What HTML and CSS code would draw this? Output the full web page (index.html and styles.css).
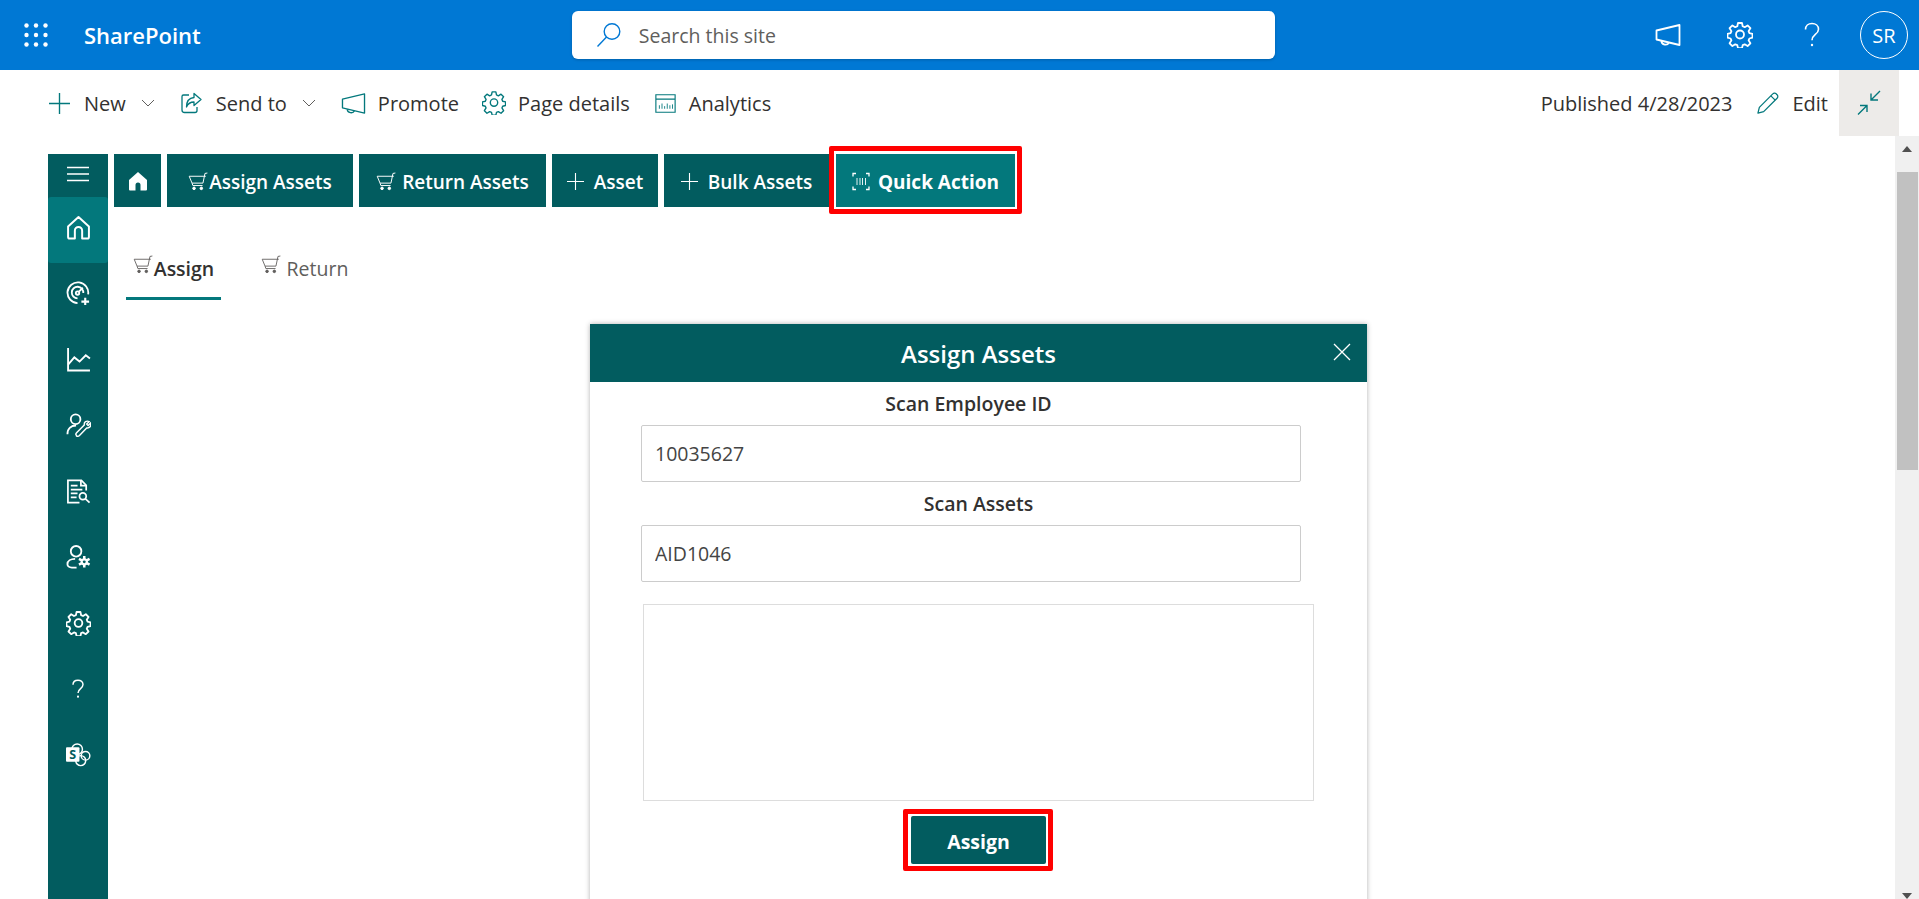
FILE: index.html
```html
<!DOCTYPE html>
<html lang="en">
<head>
  <meta charset="UTF-8">
  <title>Assign Assets</title>
  <link rel="stylesheet" href="styles.css">
</head>
<body>
  <header class="suite-bar">
    <svg class="waffle" viewBox="0 0 24 24" fill="#fff"><circle cx="2.5" cy="2.5" r="2.2"/><circle cx="12" cy="2.5" r="2.2"/><circle cx="21.500" cy="2.5" r="2.2"/><circle cx="2.5" cy="12" r="2.2"/><circle cx="12" cy="12" r="2.2"/><circle cx="21.500" cy="12" r="2.2"/><circle cx="2.5" cy="21.500" r="2.2"/><circle cx="12" cy="21.500" r="2.2"/><circle cx="21.500" cy="21.500" r="2.2"/></svg>
    <span class="brand">SharePoint</span>
    <div class="search">
      <svg class="search-icon" viewBox="0 0 26 26" fill="none" stroke="#0078d4" stroke-width="1.4"><circle cx="16" cy="9.500" r="7.800"/><path d="M10.500 15 1.500 24.500"/></svg>
      <span>Search this site</span>
    </div>
    <div class="suite-icons">
      <svg class="suite-icon" viewBox="0 0 26 24" fill="none" stroke="#fff" stroke-width="1.800" stroke-linejoin="round"><path d="M1.500 7.500 24.500 2v20L1.500 16.500z"/><path d="M6.500 18c0 4 6 5 7.500 1.500"/></svg>
      <svg class="suite-icon" viewBox="0 0 26 26" fill="none" stroke="#fff" stroke-width="1.800" stroke-linejoin="round"><use href="#gear-path"/></svg>
      <svg class="suite-icon" viewBox="0 0 26 26" fill="none" stroke="#fff" stroke-width="1.600"><path d="M6.500 7.500C6.500 3.800 9.300 1.500 13 1.500s6.500 2.300 6.500 5.700c0 5.300-6.500 5.300-6.500 11"/><circle cx="13" cy="23" r="1.200" fill="#fff" stroke="none"/></svg>
      <div class="avatar">SR</div>
    </div>
  </header>

  <div class="command-bar">
    <button class="cmd"><svg class="cmd-icon plus-icon" viewBox="0 0 20 20" stroke="#03787c" stroke-width="1.300"><path d="M10 0v20M0 10h20"/></svg><span>New</span><svg class="chev" viewBox="0 0 14 8" fill="none" stroke="#605e5c"><path d="M1 1l6 6 6-6"/></svg></button>
    <button class="cmd"><svg class="cmd-icon send" viewBox="0 0 22 22" fill="none" stroke="#03787c" stroke-width="1.300" stroke-linejoin="round"><path d="M9 3H3.500a1.500 1.500 0 0 0-1.500 1.500V18A2.500 2.500 0 0 0 4.500 20.500H15a2 2 0 0 0 2-2V15"/><path d="M14 1.500 21 7.500l-7 6V10c-4 0-6 1.500-7.500 5 0-5 2.500-9 7.500-9.500z"/></svg><span>Send to</span><svg class="chev" viewBox="0 0 14 8" fill="none" stroke="#605e5c"><path d="M1 1l6 6 6-6"/></svg></button>
    <button class="cmd promote"><svg class="cmd-icon wide" viewBox="0 0 26 24" fill="none" stroke="#03787c" stroke-width="1.400" stroke-linejoin="round"><path d="M1.500 7.500 24.500 2v20L1.500 16.500z"/><path d="M6.500 18c0 4 6 5 7.500 1.500"/></svg><span>Promote</span></button>
    <button class="cmd"><svg class="cmd-icon gear" viewBox="0 0 26 26" fill="none" stroke="#03787c" stroke-width="1.500" stroke-linejoin="round"><use href="#gear-path"/></svg><span>Page details</span></button>
    <button class="cmd"><svg class="cmd-icon" viewBox="0 0 24 22" fill="none" stroke="#03787c" stroke-width="1.300"><path d="M1 1h22v20H1zM1 6h22"/><path d="M5 17v-4M8 17v-6M11 17v-3M14 17v-6M17 17v-4M20 17v-5" stroke-width="1"/></svg><span>Analytics</span></button>
    <div class="cmd-right">
      <span class="published">Published 4/28/2023</span>
      <button class="cmd"><svg class="cmd-icon pencil" viewBox="0 0 24 24" fill="none" stroke="#03787c" stroke-width="1.300" stroke-linejoin="round"><path d="M2 22l1.500-6L17.500 2a2.500 2.500 0 0 1 4 .5 2.500 2.500 0 0 1 .5 4L8 20.500z"/><path d="M15.500 4l4.500 4.500"/></svg><span>Edit</span></button>
      <div class="collapse"><svg class="collapse-icon" viewBox="0 0 26 26" fill="none" stroke="#03787c" stroke-width="1.400"><path d="M24 1 15 10M15 3.500V10h7M2 24.500l9-9M11 22v-6.500H4"/></svg></div>
    </div>
  </div>

  <svg class="defs" width="0" height="0">
    <defs>
      <path id="gear-path" d="M11 1.500h4l.7 3.300 2 .9 2.900-1.800 2.800 2.800-1.800 2.900.8 2 3.100.7v3.900l-3.100.8-.8 1.900 1.800 2.900-2.800 2.800-2.900-1.800-2 .8-.7 3.100h-4l-.7-3.100-2-.8-2.900 1.800-2.800-2.800 1.800-2.900-.8-1.900-3.100-.8V12.300l3.100-.7.800-2-1.800-2.900 2.800-2.800 2.900 1.800 2-.9zM13 9a4 4 0 1 0 0 8 4 4 0 0 0 0-8z" transform="translate(0 -.500)"/>
      <g id="cart"><path d="M24 1l-3 .500-2.500 12H5L1.500 5h20.500" fill="none"/><path d="M5 13.500l1 3h12" fill="none"/><circle cx="7.500" cy="20" r="1.600"/><circle cx="16.500" cy="20" r="1.600"/></g>
    </defs>
  </svg>

  <div class="workspace">
    <nav class="side-nav">
      <div class="nav-toggle"><svg class="hamburger" viewBox="0 0 22 16" stroke="#fff" stroke-width="1.300"><path d="M0 1.500h22M0 8h22M0 14.500h22"/></svg></div>
      <div class="nav-item active"><svg viewBox="0 0 24 24" fill="none" stroke="#fff" stroke-width="1.900" stroke-linejoin="round"><path d="M12 2 2 11v10a1.500 1.500 0 0 0 1.500 1.500H8.500V15a3.500 3.500 0 0 1 7 0v7.500h5A1.500 1.500 0 0 0 22 21V11z"/></svg></div>
      <div class="nav-item"><svg viewBox="0 0 26 26" fill="none" stroke="#fff" stroke-width="1.900"><path d="M23 14A10.800 10.800 0 1 0 12 23"/><path d="M18 12.500A6 6 0 1 0 12 18"/><circle cx="12" cy="12.500" r="1.800"/><path d="M13.500 11l4-4"/><path d="M20 17.500v7.500M16 21.500h8" stroke-width="2.200"/></svg></div>
      <div class="nav-item"><svg viewBox="0 0 24 24" fill="none" stroke="#fff" stroke-width="1.800"><path d="M2 1v21.500h21"/><path d="M2 17l6-7 5 4 6-6 4 3"/></svg></div>
      <div class="nav-item"><svg viewBox="0 0 26 26" fill="none" stroke="#fff" stroke-width="1.900"><circle cx="10" cy="6.500" r="5"/><path d="M1.500 22c0-6 4-9 9-9"/><path d="M11 23.500c-1-1-1-2 0-3l8-8c-.5-3 2.500-5 5-3.500l-2.500 2.500 1.500 1.500 2.500-2.500c1 3-1 5.500-4 5l-7.500 8c-1 1-2 1-3 .500z" stroke-width="1.500"/></svg></div>
      <div class="nav-item"><svg viewBox="0 0 26 26" fill="none" stroke="#fff" stroke-width="1.800"><path d="M21 12V6.500L16 1.500H2v23h12"/><path d="M15.500 1.500v5.500H21"/><path d="M5 7h7M5 11h12M5 15h7M5 19h6"/><circle cx="17.500" cy="18" r="3.500"/><path d="M20 20.500l4.500 4"/></svg></div>
      <div class="nav-item"><svg viewBox="0 0 26 26" fill="none" stroke="#fff" stroke-width="1.900"><circle cx="10.500" cy="6.500" r="5.500"/><path d="M11 23.500H6c-2.500 0-4.500-1.500-4.500-3.500 0-3.500 3.500-5.500 8-5.500"/><path d="M19 11.500v12M13.500 14.500l11 6M13.500 20.500l11-6" stroke-width="2.600"/><circle cx="19" cy="17.500" r="3.800" fill="#fff" stroke="none"/><circle cx="19" cy="17.500" r="1.500" fill="#025c5f" stroke="none"/></svg></div>
      <div class="nav-item"><svg viewBox="0 0 26 26" fill="none" stroke="#fff" stroke-width="1.900" stroke-linejoin="round"><use href="#gear-path"/></svg></div>
      <div class="nav-item"><svg class="help" viewBox="0 0 26 26" fill="none" stroke="#fff" stroke-width="1.900"><path d="M6.500 7.500C6.500 3.800 9.300 1.500 13 1.500s6.500 2.300 6.500 5.700c0 5.300-6.500 5.300-6.500 11"/><circle cx="13" cy="23" r="1.400" fill="#fff" stroke="none"/></svg></div>
      <div class="nav-item"><svg viewBox="0 0 26 26" fill="none" stroke="#fff" stroke-width="1.500"><circle cx="11.600" cy="6.500" r="5.500"/><circle cx="20.300" cy="13.300" r="4.500"/><circle cx="15.300" cy="18.300" r="5.200"/><rect x="0" y="4.500" width="14" height="15" rx="1" fill="#fff" stroke="none"/><text x="7" y="16.700" class="sp-letter">S</text></svg></div>
    </nav>

    <main class="content">
      <div class="toolbar">
        <button class="tool home"><svg viewBox="0 0 20 20" fill="#fff"><path d="M10 1 1 9v9.500a1 1 0 0 0 1 1h5.500V14a2.500 2.500 0 0 1 5 0v5.500H18a1 1 0 0 0 1-1V9z"/></svg></button>
        <button class="tool assign"><svg class="cart" viewBox="0 0 26 23" stroke="#fff" fill="#fff" stroke-width="1.200"><use href="#cart"/></svg>Assign Assets</button>
        <button class="tool return"><svg class="cart gap" viewBox="0 0 26 23" stroke="#fff" fill="#fff" stroke-width="1.200"><use href="#cart"/></svg>Return Assets</button>
        <button class="tool asset"><svg class="plus" viewBox="0 0 20 20" stroke="#fff" stroke-width="1.300"><path d="M10 0v20M0 10h20"/></svg>Asset</button>
        <button class="tool bulk"><svg class="plus" viewBox="0 0 20 20" stroke="#fff" stroke-width="1.300"><path d="M10 0v20M0 10h20"/></svg>Bulk Assets</button>
        <div class="marked quick-mark">
          <button class="tool quick"><svg class="scan" viewBox="0 0 18 19" fill="none" stroke="#fff" stroke-width="1.300"><path d="M4 1.500H1v3M14 1.500h3v3M4 17.500H1v-3M14 17.500h3v-3"/><path d="M5 6v7M8 6v7M10.500 6v7M13.500 6v7" stroke-width=".9"/></svg>Quick Action</button>
        </div>
      </div>

      <div class="tabs">
        <div class="tab selected"><svg class="cart" viewBox="0 0 26 23" stroke="#605e5c" fill="#605e5c" stroke-width="1.100"><use href="#cart"/></svg>Assign</div>
        <div class="tab"><svg class="cart gap" viewBox="0 0 26 23" stroke="#605e5c" fill="#605e5c" stroke-width="1.100"><use href="#cart"/></svg>Return</div>
      </div>

      <section class="modal">
        <div class="modal-head">
          <h2>Assign Assets</h2>
          <svg class="close" viewBox="0 0 18 18" stroke="#fff" stroke-width="1.300"><path d="M1 1l16 16M17 1 1 17"/></svg>
        </div>
        <div class="modal-body">
          <label class="field-label employee">Scan Employee ID</label>
          <input class="field" type="text" value="10035627">
          <label class="field-label">Scan Assets</label>
          <input class="field" type="text" value="AID1046">
          <div class="asset-list"></div>
          <div class="marked assign-mark">
            <button class="submit">Assign</button>
          </div>
        </div>
      </section>
    </main>

    <div class="scrollbar">
      <div class="arrow-up"></div>
      <div class="thumb"></div>
      <div class="arrow-down"></div>
    </div>
  </div>
</body>
</html>
```

FILE: styles.css
```css
* { box-sizing: border-box; }
html, body { height: 100%; }
body {
  margin: 0;
  height: 899px;
  overflow: hidden;
  display: flex;
  flex-direction: column;
  background: #fff;
  color: #323130;
  font-family: "Open Sans", "Noto Sans", sans-serif;
  font-size: 20px;
}
button { font-family: inherit; border: none; cursor: pointer; }
.defs { position: absolute; }

/* suite bar */
.suite-bar {
  height: 70px;
  flex: none;
  background: #0078d4;
  display: flex;
  align-items: center;
  color: #fff;
}
.waffle { width: 24px; height: 24px; margin-left: 24px; }
.brand { margin-left: 36px; font-size: 22px; font-weight: 600; }
.search {
  width: 703px;
  height: 48px;
  margin-left: 371px;
  background: #fff;
  border-radius: 6px;
  display: flex;
  align-items: center;
  color: #605e5c;
  font-size: 19.500px;
  box-shadow: 0 1px 3px rgba(0,0,0,.2);
}
.search-icon { width: 26px; height: 26px; margin-left: 24px; margin-right: 17px; }
.suite-icons { margin-left: auto; display: flex; align-items: center; }
.suite-icon { width: 26px; height: 26px; margin-right: 46px; }
.suite-icon:nth-child(3) { margin-right: 35px; }
.avatar {
  width: 48px; height: 48px;
  margin-right: 11px;
  border: 1px solid #fff;
  border-radius: 50%;
  display: flex; align-items: center; justify-content: center;
  font-size: 20px;
}

/* command bar */
.command-bar {
  height: 66px;
  flex: none;
  display: flex;
  align-items: center;
  padding-left: 49px;
}
.cmd {
  background: none;
  color: #323130;
  font-size: 20px;
  display: flex;
  align-items: center;
  padding: 0;
  margin-right: 25px;
}
.cmd-icon { width: 21px; height: 21px; margin-right: 13px; }
.cmd-icon.plus-icon { margin-right: 14px; }
.cmd-icon.send { width: 22px; height: 22px; margin-right: 14px; }
.cmd-icon.wide { width: 25px; height: 23px; margin-right: 12px; }
.cmd-icon.gear { width: 24px; height: 24px; margin-right: 12px; }
.cmd-icon.pencil { width: 23px; height: 23px; }
.cmd.promote { margin-right: 23px; }
.chev { width: 14px; height: 8px; margin-left: 15px; }
.cmd-right { margin-left: auto; display: flex; align-items: center; height: 100%; padding-right: 20px; }
.published { margin-right: 24px; }
.cmd-right .cmd { margin-right: 11px; }
.collapse {
  width: 60px; height: 66px;
  background: #edebe9;
  display: flex; align-items: center; justify-content: center;
}
.collapse-icon { width: 26px; height: 26px; }

/* main area */
.workspace { flex: 1; min-height: 0; display: flex; padding-left: 48px; }
.side-nav { width: 60px; flex: none; margin-top: 18px; background: #025c5f; }
.nav-toggle { height: 43px; padding-bottom: 4px; display: flex; align-items: center; justify-content: center; }
.hamburger { width: 22px; height: 16px; }
.nav-item { height: 66px; padding-bottom: 6px; display: flex; align-items: center; justify-content: center; }
.nav-item svg { width: 25px; height: 25px; }
.nav-item .help { width: 20px; height: 24px; }
.nav-item.active { background: #03787c; border-radius: 3px; }
.sp-letter { font-size: 13px; font-weight: 700; fill: #025c5f; stroke: none; text-anchor: middle; }

.content { flex: 1; min-width: 0; padding-left: 6px; padding-top: 18px; }
.toolbar { display: flex; height: 53px; gap: 6px; }
.tool {
  height: 53px;
  background: #025c5f;
  color: #fff;
  font-size: 19px;
  font-weight: 600;
  display: flex;
  align-items: center;
  justify-content: center;
  padding: 2px 0 0;
}
.tool.home { width: 47px; padding: 0; }
.tool.home svg { width: 20px; height: 20px; }
.tool.assign { width: 186px; }
.tool.return { width: 187px; }
.tool.asset { width: 106px; }
.tool.bulk { width: 165px; }
.tool.quick { width: 179px; background: #03787c; font-weight: 700; }
.cart { width: 21px; height: 19px; flex: none; }
.cart.gap { margin-right: 5px; }
.plus { width: 17px; height: 17px; margin-right: 10px; }
.scan { width: 18px; height: 19px; margin-right: 8px; }

.marked { border: 5px solid #f00; border-radius: 2px; background: #fff; display: flex; }
.quick-mark { height: 68px; margin: -8px 0 0 -6px; padding: 3px 2px 2px; }

.tabs { display: flex; margin-top: 30px; margin-left: 12px; }
.tab {
  width: 95px;
  height: 63px;
  padding-top: 18px;
  display: flex;
  justify-content: center;
  align-items: flex-start;
  color: #605e5c;
  font-size: 19.500px;
}
.tab.selected { color: #323130; font-weight: 600; border-bottom: 3px solid #03787c; margin-right: 36px; }

.modal {
  width: 777px;
  margin-left: 476px;
  margin-top: 24px;
  background: #fff;
  box-shadow: 0 0 5px rgba(0,0,0,.3);
  height: 600px;
}
.modal-head {
  height: 58px;
  background: #025c5f;
  color: #fff;
  display: flex;
  align-items: center;
  justify-content: center;
  position: relative;
}
.modal-head h2 { margin: 0; font-size: 24px; font-weight: 600; }
.close { position: absolute; right: 16px; top: 19px; width: 18px; height: 18px; }
.modal-body { display: flex; flex-direction: column; align-items: center; padding-top: 9px; }
.field-label { height: 34px; font-size: 19.500px; line-height: 26px; font-weight: 600; color: #323130; }
.field-label.employee { padding-right: 20px; }
.field {
  width: 660px;
  height: 57px;
  margin-left: -15px;
  margin-bottom: 9px;
  padding: 0 13px;
  flex: none;
  border: 1px solid #ccc;
  border-radius: 2px;
  font-family: inherit;
  font-size: 19.500px;
  color: #444;
}
.asset-list { width: 671px; height: 197px; margin-top: 13px; border: 1px solid #ddd; }
.assign-mark { width: 150px; height: 62px; margin: 8px 0 0 -1px; padding: 2px 2px 2px 3px; }
.submit {
  width: 100%;
  height: 48px;
  padding-top: 3px;
  background: #025c5f;
  color: #fff;
  font-size: 19.500px;
  font-weight: 700;
  border-radius: 2px;
}

.scrollbar {
  position: absolute;
  right: 0;
  top: 136px;
  bottom: 0;
  width: 24px;
  background: #f0f0f0;
}
.thumb { position: absolute; top: 36px; left: 2px; right: 1px; height: 298px; background: #c1c1c1; }
.arrow-up, .arrow-down { position: absolute; left: 7px; width: 0; height: 0; border-left: 5.500px solid transparent; border-right: 5.500px solid transparent; }
.arrow-up { top: 10px; border-bottom: 6px solid #505050; }
.arrow-down { bottom: 0; border-top: 6px solid #505050; }
```
